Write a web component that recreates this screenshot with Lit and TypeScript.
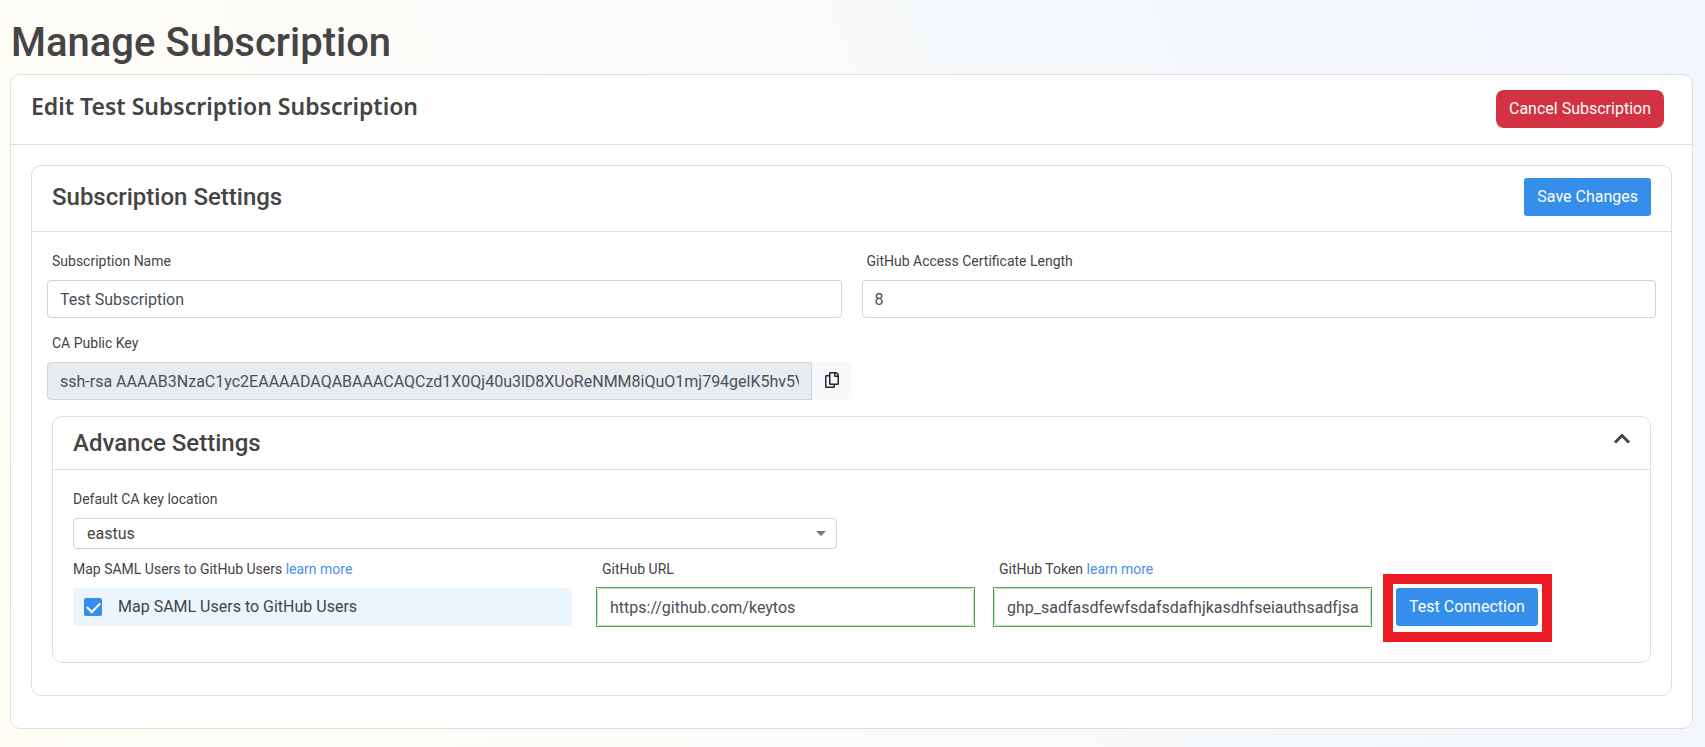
import { LitElement, html, css, svg } from "lit";
import { customElement } from "lit/decorators.js";

const copyIcon = svg`<path fill="currentColor" d="M433.941 65.941l-51.882-51.882A48 48 0 0 0 348.118 0H176c-26.51 0-48 21.49-48 48v48H48c-26.51 0-48 21.49-48 48v320c0 26.51 21.49 48 48 48h224c26.51 0 48-21.49 48-48v-48h80c26.51 0 48-21.49 48-48V99.882a48 48 0 0 0-14.059-33.941zM266 464H54a6 6 0 0 1-6-6V150a6 6 0 0 1 6-6h74v224c0 26.51 21.49 48 48 48h96v42a6 6 0 0 1-6 6zm128-96H182a6 6 0 0 1-6-6V54a6 6 0 0 1 6-6h106v88c0 13.255 10.745 24 24 24h88v202a6 6 0 0 1-6 6zm6-256h-64V48h9.632c1.591 0 3.117.632 4.243 1.757l48.368 48.368a6 6 0 0 1 1.757 4.243V112z"/>`;

@customElement("app-root")
export class AppRoot extends LitElement {
  static styles = css`
    :host {
      display: block;
      box-sizing: border-box;
      min-height: 100vh;
      padding: 19px 12px 18px 10px;
      background: linear-gradient(70deg, #fffdf6 0%, #fdfcf7 22%, #fafafa 46%, #f4f8fb 68%, #f2f5fb 90%, #f0f5ff 100%);
      color: #444;
      font-family: Roboto, "Liberation Sans", sans-serif;
      font-size: 16px;
      line-height: 24px;
    }
    * { box-sizing: border-box; }
    h1, h2, h3 { margin: 0; font-weight: 500; }
    h1 { font-size: 40px; line-height: 48px; padding: 0 0 7px 1px; }
    h2, h3 { font-size: 24px; line-height: 28px; }
    h2 { font-family: "Noto Sans", "Open Sans", sans-serif; font-weight: 600; font-size: 23px; padding-top: 2px; }
    a { color: #4a8fea; text-decoration: none; }
    .card { background: #fff; border: 1px solid #dedede; border-radius: 10px; }
    .head { display: flex; justify-content: space-between; align-items: flex-start; border-bottom: 1px solid #dedede; }
    .page-head { padding: 15px 28px 16px 20px; }
    .page-body { padding: 20px 20px 32px; }
    .settings-head { padding: 12px 20px 15px; }
    .settings-head h3 { padding-top: 5px; }
    .settings-body { padding: 20px 15px 32px; }
    .advanced { margin: 16px 5px 0; }
    .advanced-head { padding: 12px 19px 12px 20px; }
    .advanced-body { padding: 20px 20px 36px; }
    .row { display: grid; grid-template-columns: 1fr 1fr; column-gap: 20px; }
    .key { display: grid; grid-template-columns: 1fr 1fr; column-gap: 14px; margin: 16px -15px 0 0; }
    label, .caption { display: block; font-size: 14px; line-height: 18px; padding-left: 5px; margin-bottom: 10px; }
    .flush { padding-left: 0; }
    input[type="text"], select {
      display: block;
      width: 100%;
      height: 38px;
      padding: 0 12px;
      border: 1px solid #ced4da;
      border-radius: 4px;
      background: #fff;
      color: #495057;
      font: inherit;
      outline: none;
    }
    .box { outline: 1px solid #3fae49; }
    .group { display: flex; }
    .group input[type="text"] { flex: 1; min-width: 0; background: #e9ecef; border-radius: 4px 0 0 4px; }
    button { font: inherit; height: 38px; padding: 0 13px; border: 0; border-radius: 3px; color: #fff; background: #348eea; white-space: nowrap; }
    .danger { background: #d33242; border-radius: 8px; }
    .group .copy { width: 40px; padding: 0; background: #f8f9fa; color: #212529; border-radius: 0 4px 4px 0; }
    .copy svg { display: block; margin: -2px auto 0; }
    .toggle { padding: 0; height: 28px; background: none; color: #444; }
    .toggle svg { display: block; margin-bottom: 8px; }
    .location { width: 49.1%; }
    .select { position: relative; }
    select { height: 31px; appearance: none; color: #444; padding: 0 13px; }
    .select svg { position: absolute; right: 11px; top: 13px; pointer-events: none; }
    .quad { display: grid; grid-template-columns: 504fr 377fr 377fr 239fr; column-gap: 20px; margin-top: 11px; }
    .map { padding-right: 5px; }
    .check { display: flex; align-items: center; height: 38px; margin: 0; padding: 0 11px; gap: 16px; border-radius: 4px; background: #ebf5fd; font-size: 16px; line-height: 24px; }
    .check input { appearance: none; width: 18px; height: 18px; margin: 0; border-radius: 2px; background: #348eea; display: grid; }
    .check input::after { content: ""; width: 11px; height: 6px; margin: 4px 0 0 3px; border: solid #fff; border-width: 0 0 2px 2px; transform: rotate(-45deg); }
    .test { padding: 28px 0 0 5px; }
    .marked { position: relative; display: inline-block; }
    .marked::after { content: ""; position: absolute; inset: -14px -14px -16px -13px; border: 10px solid #ed1c24; pointer-events: none; }
    .marked button { display: block; }
  `;

  render() {
    return html`
      <h1>Manage Subscription</h1>
      <main class="card">
        <header class="head page-head">
          <h2>Edit Test Subscription Subscription</h2>
          <button class="danger" type="button">Cancel Subscription</button>
        </header>
        <div class="page-body">
          <section class="card">
            <header class="head settings-head">
              <h3>Subscription Settings</h3>
              <button type="button">Save Changes</button>
            </header>
            <div class="settings-body">
              <div class="row">
                <div>
                  <label for="name">Subscription Name</label>
                  <input id="name" type="text" value="Test Subscription" />
                </div>
                <div>
                  <label for="length">GitHub Access Certificate Length</label>
                  <input id="length" type="text" value="8" />
                </div>
              </div>
              <div class="key">
                <div>
                  <label for="key">CA Public Key</label>
                  <div class="group">
                    <input id="key" type="text" readonly value="ssh-rsa AAAAB3NzaC1yc2EAAAADAQABAAACAQCzd1X0Qj40u3lD8XUoReNMM8iQuO1mj794gelK5hv5V" />
                    <button class="copy" type="button" aria-label="Copy">
                      <svg width="14" height="16" viewBox="0 0 448 512">${copyIcon}</svg>
                    </button>
                  </div>
                </div>
              </div>
              <section class="card advanced">
                <header class="head advanced-head">
                  <h3>Advance Settings</h3>
                  <button class="toggle" type="button" aria-label="Collapse">
                    <svg width="18" height="12" viewBox="0 0 18 12"><path d="M2 9.500L9 2.500L16 9.500" fill="none" stroke="currentColor" stroke-width="3" /></svg>
                  </button>
                </header>
                <div class="advanced-body">
                  <div class="location">
                    <label class="flush" for="location">Default CA key location</label>
                    <div class="select">
                      <select id="location"><option>eastus</option></select>
                      <svg width="10" height="5" viewBox="0 0 10 5"><path d="M0 0h10L5 5z" fill="#777" /></svg>
                    </div>
                  </div>
                  <div class="quad">
                    <div class="map">
                      <div class="caption flush">Map SAML Users to GitHub Users <a href="#">learn more</a></div>
                      <label class="check"><input type="checkbox" checked />Map SAML Users to GitHub Users</label>
                    </div>
                    <div>
                      <label for="url">GitHub URL</label>
                      <div class="box"><input id="url" type="text" value="https://github.com/keytos" /></div>
                    </div>
                    <div>
                      <label for="token">GitHub Token <a href="#">learn more</a></label>
                      <div class="box"><input id="token" type="text" value="ghp_sadfasdfewfsdafsdafhjkasdhfseiauthsadfjsa" /></div>
                    </div>
                    <div class="test">
                      <div class="marked"><button type="button">Test Connection</button></div>
                    </div>
                  </div>
                </div>
              </section>
            </div>
          </section>
        </div>
      </main>
    `;
  }
}
